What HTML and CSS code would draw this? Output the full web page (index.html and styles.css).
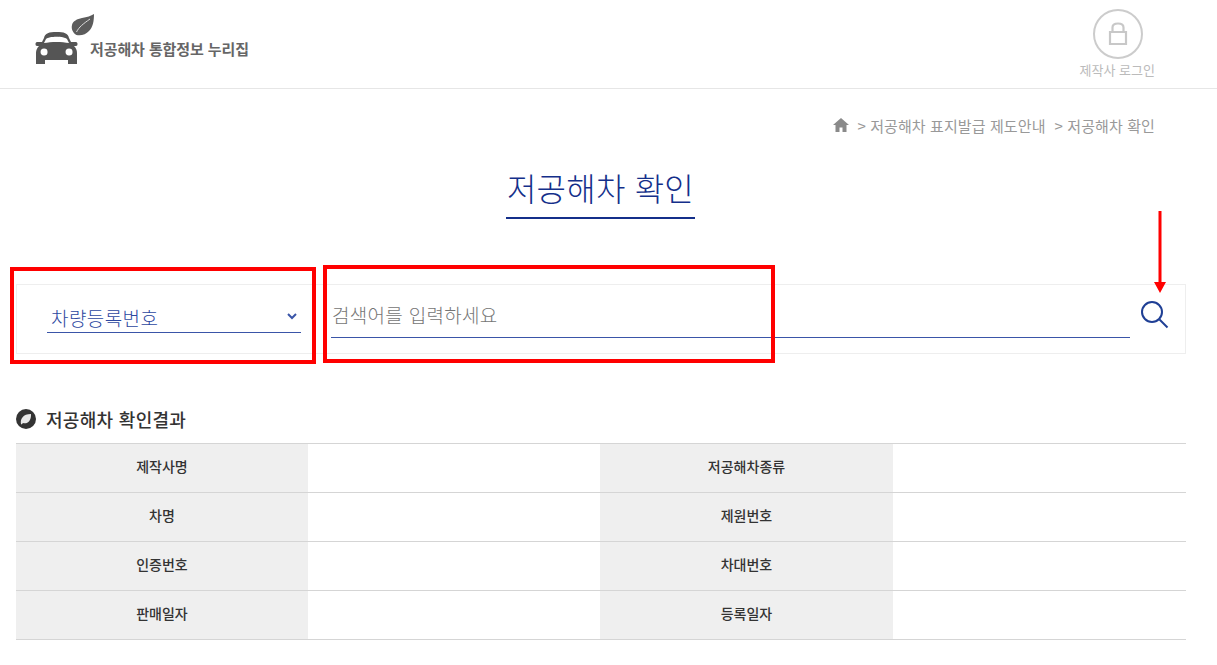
FILE: index.html
```html
<!DOCTYPE html>
<html lang="ko">
<head>
<meta charset="utf-8">
<title>저공해차 확인</title>
<link rel="stylesheet" href="styles.css">
</head>
<body>
<header class="header">
  <a class="logo">
    <svg class="logo-icon" width="60" height="51" viewBox="0 0 60 51">
      <path fill="#5c5c5c" d="M59 0C59 7 58 13 54 17 51 20.500 46 22 41.500 21 38 19 36 15 37 11 38 7 42 5 47 4 52 3 56 2 59 0Z"/>
      <path fill="none" stroke="#ddd" stroke-width="1" d="M41.500 18C44 13 48 10 55 5"/>
      <path fill="#555" fill-rule="evenodd" d="M9 24C10 19 14 18 21.500 18S33 19 34 24L36 28H41C43 28 43 32 41 32H39C41 34 42 36 42 39V50H33V46H10V50H1V39C1 36 2 34 4 32H2C0 32 0 28 2 28H7ZM11 25 9 29C16 27.500 27 27.500 34 29L32 25C29 22 14 22 11 25ZM9 34.500A3.500 3.500 0 1 0 9.100 41.500 3.500 3.500 0 1 0 9 34.500ZM34 34.500A3.500 3.500 0 1 0 34.100 41.500 3.500 3.500 0 1 0 34 34.500Z"/>
    </svg>
    <span class="logo-text">저공해차 통합정보 누리집</span>
  </a>
  <a class="login">
    <span class="login-circle">
      <svg width="20" height="24" viewBox="0 0 20 24">
        <path fill="none" stroke="#c8c8c8" stroke-width="2.200" d="M4.500 10V5.500C4.500 2.500 6.500 1.500 10 1.500S15.500 2.500 15.500 5.500V10M2 10H18V22H2Z"/>
      </svg>
    </span>
    <span class="login-text">제작사 로그인</span>
  </a>
</header>

<main class="content">
  <nav class="breadcrumb">
    <svg width="16" height="14" viewBox="0 0 16 14">
      <path fill="#8a8a8a" d="M8 0 16 7H13.500V14H9.500V9.500H6.500V14H2.500V7H0Z"/>
    </svg>
    <span class="crumb">&gt; 저공해차 표지발급 제도안내</span>
    <span class="crumb crumb-last">&gt; 저공해차 확인</span>
  </nav>

  <div class="title-row">
    <h1 class="title">저공해차 확인</h1>
  </div>

  <form class="search">
    <div class="select">
      <span class="select-value">차량등록번호</span>
      <svg class="chevron" width="10" height="7" viewBox="0 0 10 7">
        <path fill="none" stroke="#3a55a8" stroke-width="2" d="M1 1 5 5 9 1"/>
      </svg>
    </div>
    <div class="field">검색어를 입력하세요</div>
    <button class="search-btn" type="button" aria-label="검색">
      <svg width="30" height="30" viewBox="0 0 30 30">
        <circle cx="13" cy="13" r="10" fill="none" stroke="#1f3f95" stroke-width="2"/>
        <path fill="none" stroke="#1f3f95" stroke-width="2" d="M20.500 20.500 28.500 28.500"/>
      </svg>
    </button>
    <span class="mark mark-select"></span>
    <span class="mark mark-field"></span>
    <svg class="mark-arrow" width="12" height="82" viewBox="0 0 12 82">
      <path fill="#f00" d="M4.500 0H7.500V71H12L6 82 0 71H4.500Z"/>
    </svg>
  </form>

  <h2 class="result-title">
    <svg width="20" height="20" viewBox="0 0 20 20">
      <circle cx="10" cy="10" r="10" fill="#333"/>
      <path fill="#e8e8e8" d="M5 15C4 10 7 5 15 5 15.500 12 11 15.500 7 14L5.500 15.500Z"/>
    </svg>
    저공해차 확인결과
  </h2>

  <div class="table">
    <div class="th">제작사명</div><div class="td"></div>
    <div class="th">저공해차종류</div><div class="td"></div>
    <div class="th">차명</div><div class="td"></div>
    <div class="th">제원번호</div><div class="td"></div>
    <div class="th">인증번호</div><div class="td"></div>
    <div class="th">차대번호</div><div class="td"></div>
    <div class="th">판매일자</div><div class="td"></div>
    <div class="th">등록일자</div><div class="td"></div>
  </div>
</main>
</body>
</html>
```
FILE: styles.css
```css
* { box-sizing: border-box; }
html, body { margin: 0; padding: 0; }
body {
  background: #fff;
  font-family: "Noto Sans CJK KR", "Noto Sans", sans-serif;
  color: #333;
  overflow: hidden;
}
.header {
  height: 89px;
  border-bottom: 1px solid #e6e6e6;
  display: flex;
  justify-content: space-between;
  align-items: flex-start;
  padding: 0 62px 0 35px;
}
.logo { display: flex; align-items: flex-start; padding-top: 14px; }
.logo-icon { display: block; }
.logo-text {
  margin: 25px 0 0 -5px;
  font-size: 15px;
  line-height: 20px;
  font-weight: 700;
  color: #666;
  letter-spacing: -0.1px;
  white-space: nowrap;
}
.login { display: flex; flex-direction: column; align-items: center; padding-top: 9px; }
.login-circle {
  width: 50px;
  height: 50px;
  margin-left: 1px;
  border: 2px solid #ccc;
  border-radius: 50%;
  display: flex;
  align-items: center;
  justify-content: center;
}
.login-text {
  margin-top: 2px;
  font-size: 13px;
  line-height: 18px;
  color: #bbb;
  white-space: nowrap;
}
.content { padding: 0 31px 0 16px; }
.breadcrumb {
  display: flex;
  justify-content: flex-end;
  align-items: center;
  height: 20px;
  margin-top: 26px;
  padding-right: 31px;
  color: #999;
  font-size: 15px;
  letter-spacing: 0.1px;
  gap: 8px;
}
.crumb-last { margin-left: 1px; }
.title-row { display: flex; justify-content: center; margin-top: 31px; }
.title {
  margin: 0 1px 0 0;
  padding: 0 1px 8px;
  font-size: 32px;
  line-height: 43px;
  font-weight: 300;
  letter-spacing: 0.2px;
  color: #142f8a;
  border-bottom: 2px solid #142f8a;
  white-space: nowrap;
}
.search {
  position: relative;
  display: flex;
  align-items: flex-start;
  height: 70px;
  margin-top: 65px;
  border: 1px solid #eee;
}
.select {
  width: 254px;
  height: 48px;
  margin: 0 0 0 30px;
  flex: none;
  display: flex;
  justify-content: space-between;
  align-items: center;
  padding: 18px 4px 0 4px;
  border-bottom: 1px solid #3a55a8;
  color: #2c479f;
  font-size: 19px;
  font-weight: 300;
  letter-spacing: 0.4px;
}
.chevron { margin-bottom: 2px; }
.field {
  flex: 1;
  height: 53px;
  margin-left: 30px;
  padding: 16px 0 0 1px;
  border-bottom: 1px solid #3a55a8;
  color: #757575;
  font-size: 19px;
  font-weight: 300;
  letter-spacing: 0.3px;
  line-height: 28px;
}
.search-btn {
  flex: none;
  width: 55px;
  height: 44px;
  padding: 14px 0 0 9px;
  border: 0;
  background: none;
  display: block;
}
.search-btn svg { display: block; }
.mark { position: absolute; border: 4px solid #f00; }
.mark-select { left: -7px; top: -18px; width: 306px; height: 97px; }
.mark-field { left: 306px; top: -20px; width: 452px; height: 98px; }
.mark-arrow { position: absolute; left: 1137px; top: -74px; }
.result-title {
  display: flex;
  align-items: center;
  gap: 10px;
  margin: 53px 0 0;
  height: 24px;
  font-size: 18px;
  letter-spacing: 0.3px;
  font-weight: 500;
  color: #333;
}
.table {
  display: grid;
  grid-template-columns: 292px 292px 293px 293px;
  grid-auto-rows: 49px;
  margin-top: 12px;
  border-top: 1px solid #d5d5d5;
}
.th, .td { border-bottom: 1px solid #d5d5d5; }
.th {
  background: #efefef;
  display: flex;
  align-items: center;
  justify-content: center;
  padding-bottom: 4px;
  font-size: 14px;
  font-weight: 500;
  color: #333;
}
```
